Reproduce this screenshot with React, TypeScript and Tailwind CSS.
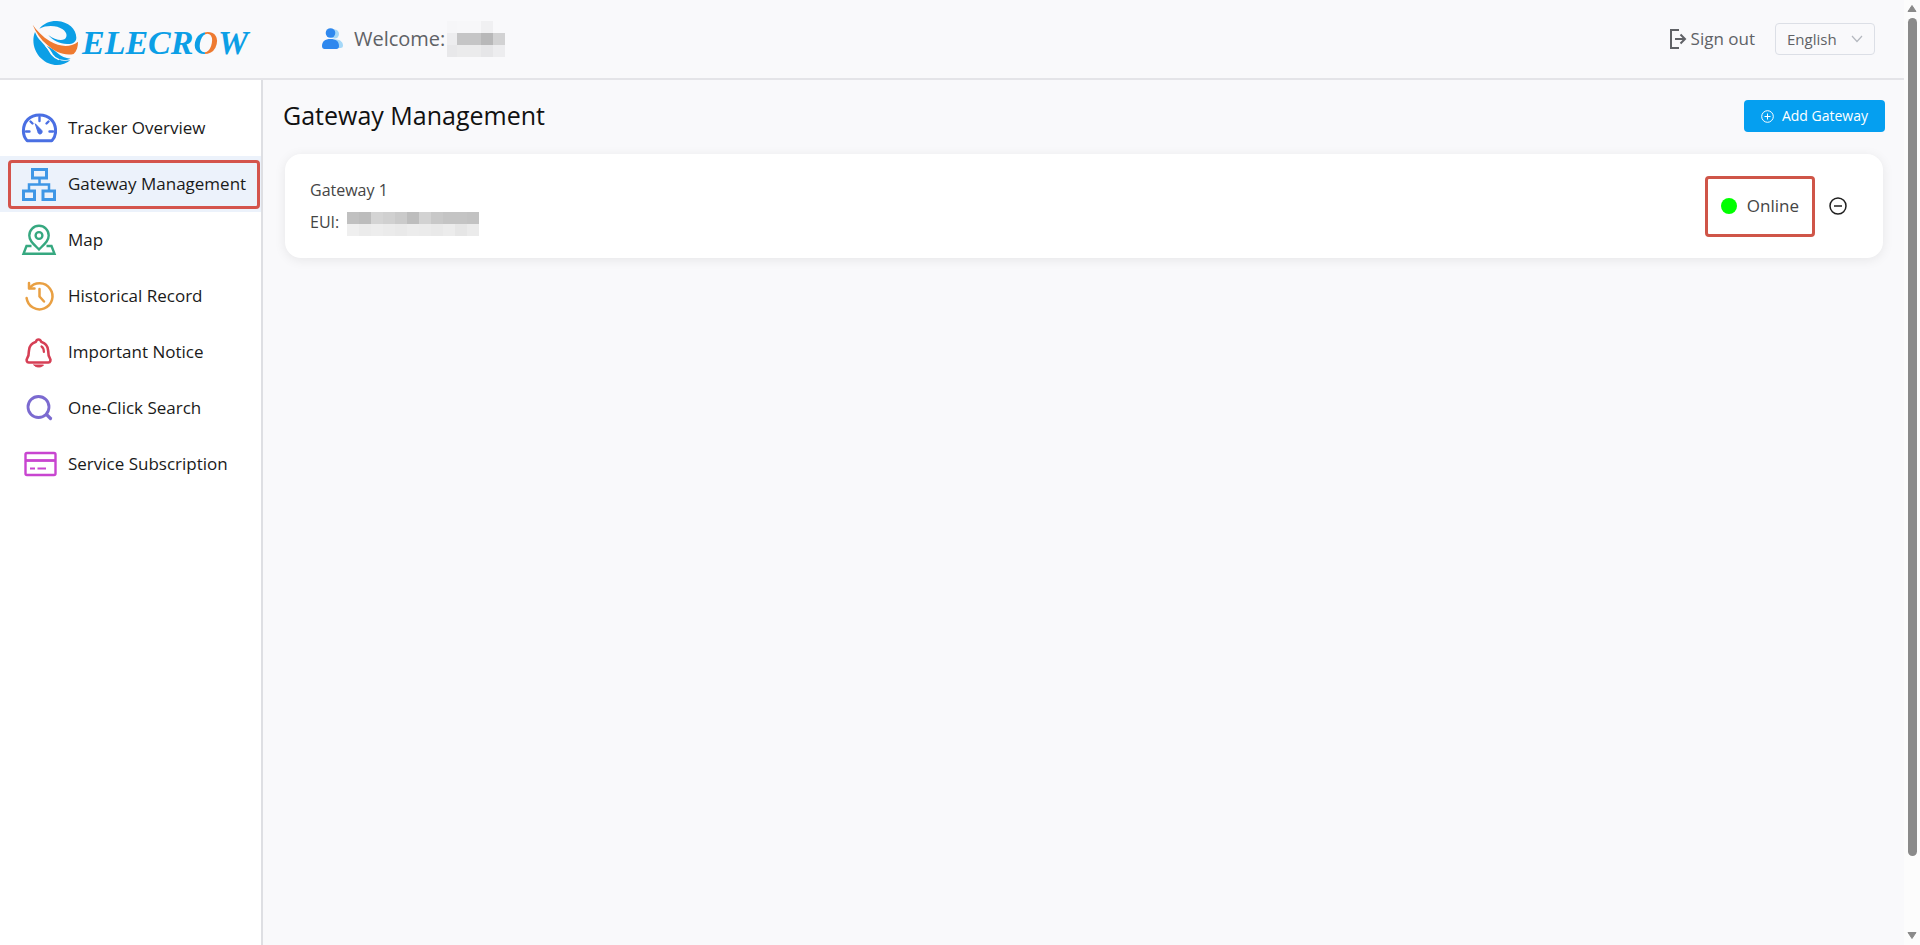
import type { ReactNode } from "react";

type NavItem = { label: string; icon: ReactNode; active?: boolean };

const GaugeIcon = () => (
  <svg width="36" height="36" viewBox="0 0 36 36" fill="none" stroke="#4a6fe3" strokeWidth="3" strokeLinecap="round" strokeLinejoin="round" aria-hidden="true">
    <path d="M6.200 30.800C3.600 28 2.400 24.500 2.400 21 2.400 11.500 9 5 18.500 5S34.600 11.500 34.600 21c0 3.500-1.200 7-3.800 9.800Z" />
    <path strokeWidth="2.400" d="M18.500 7v4M9.500 11.500l2 2M27.500 11.500l-2 2M5 21.500h3.500M32 21.500h-3.500" />
    <path fill="#4a6fe3" strokeWidth="1" d="M14.500 14l6.300 6.500c1 1.600-.2 3.700-2 3.500-1.200-.2-1.900-1.200-2-2.200Z" />
  </svg>
);

const NetworkIcon = () => (
  <svg width="36" height="36" viewBox="0 0 36 36" fill="none" stroke="#3f97e6" strokeWidth="3" aria-hidden="true">
    <path d="M11.500 3.500h14v8.500h-14zM2.500 25h11v8.500h-11zM22 25h11.500v8.500H22z" />
    <path strokeWidth="2.500" d="M18.500 12v6M8 25v-6.500h20V25" />
  </svg>
);

const MapIcon = () => (
  <svg width="36" height="36" viewBox="0 0 36 36" fill="none" stroke="#36a880" strokeWidth="2.400" strokeLinejoin="miter" aria-hidden="true">
    <path d="M18 27.500C12.500 22 8.300 18.800 8.300 13.500a9.700 9.700 0 0 1 19.400 0c0 5.300-4.200 8.500-9.700 14Z" />
    <circle cx="18" cy="13.500" r="3.400" />
    <path d="M10.500 24H5.500L2.500 31.800h31L30.500 24h-5" />
  </svg>
);

const HistoryIcon = () => (
  <svg width="36" height="36" viewBox="0 0 36 36" fill="none" stroke="#e9a043" strokeWidth="2.500" strokeLinecap="round" strokeLinejoin="round" aria-hidden="true">
    <path d="M5.600 20A13 13 0 1 0 8.500 10" />
    <path d="M8 5v5.500h5.500" />
    <path d="M18.500 11v7.500l4.500 5" />
  </svg>
);

const BellIcon = () => (
  <svg width="36" height="36" viewBox="0 0 36 36" fill="none" stroke="#d63f55" strokeWidth="2.600" strokeLinecap="round" strokeLinejoin="round" aria-hidden="true">
    <path d="M17.500 5.500c1.400 0 2.200 1 2.600 2.200 4.500 1.500 7.100 5 7.100 9.300 0 4.500.4 5.600 1.800 7.500 1 1.400.4 4-1.600 4H7.700c-2 0-2.600-2.600-1.600-4C7.500 22.600 7.900 21.500 7.900 17c0-4.300 2.600-7.800 7.100-9.300.3-1.200 1.100-2.200 2.500-2.200Z" />
    <path strokeWidth="2.200" d="M20.500 12.500c1.700 1 2.400 2.600 2.400 5.500" />
    <path fill="#d63f55" strokeWidth="1" d="M13 31h9.500c-1 1.400-2.600 2-4.700 2S14 32.400 13 31Z" />
  </svg>
);

const SearchIcon = () => (
  <svg width="36" height="36" viewBox="0 0 36 36" fill="none" stroke="#7b6ad0" strokeWidth="2.800" strokeLinecap="round" aria-hidden="true">
    <circle cx="17.500" cy="17" r="10.500" />
    <path strokeWidth="3.200" d="M25.500 24.500l4 4" />
  </svg>
);

const CardIcon = () => (
  <svg width="36" height="36" viewBox="0 0 36 36" fill="none" stroke="#c845d0" strokeWidth="2.400" strokeLinejoin="round" aria-hidden="true">
    <rect x="4.500" y="7" width="30" height="22" rx="1.500" />
    <path strokeWidth="2.800" d="M4.500 14.500h30" />
    <path strokeWidth="2.200" d="M9 22.500h5M16.500 22.500h8.500" />
  </svg>
);

const items: NavItem[] = [
  { label: "Tracker Overview", icon: <GaugeIcon /> },
  { label: "Gateway Management", icon: <NetworkIcon />, active: true },
  { label: "Map", icon: <MapIcon /> },
  { label: "Historical Record", icon: <HistoryIcon /> },
  { label: "Important Notice", icon: <BellIcon /> },
  { label: "One-Click Search", icon: <SearchIcon /> },
  { label: "Service Subscription", icon: <CardIcon /> },
];

function Logo() {
  return (
    <a href="#" aria-label="Elecrow" className="flex items-center gap-1 pt-1">
      <svg width="46" height="46" viewBox="18 24 138 138" aria-hidden="true">
        <g fill="#0c9fe6">
          <path d="M40 50C54 33 74 26 93 27c34 2 58 24 58 50 0 13-12 20-28 19-22-1-42-10-56-27 17 13 37 19 48 13 10-6 9-20-5-30C94 41 64 38 40 50Z" />
          <path d="M27 60C17 84 22 116 45 139c26 26 64 26 88 6-22 4-46-2-60-20C64 110 55 98 45 88 37 80 31 70 27 60Z" />
          <path d="M61 101c13 5 26 15 36 24 9 8 20 13 37 15-18 8-44 3-54-10-6-11-11-20-19-29Z" />
        </g>
        <path fill="none" stroke="#f9f9fb" strokeWidth="4" d="M59 101c10 8 15 18 20 27 4 6 10 12 20 15" />
        <path fill="#ee7a30" d="M20 38c12 18 30 36 52 50 30 17 60 20 84 1 0 14-3 27-13 37-28 6-56-6-79-27C44 82 30 62 20 38Z" />
      </svg>
      <span className="font-['Liberation_Serif',serif] text-[34px] leading-10 font-bold text-[#0c9fe6] italic">
        ELECR
        <span className="bg-linear-to-r from-[#0c9fe6] from-50% to-[#ee7a30] to-50% bg-clip-text text-transparent">O</span>
        W
      </span>
    </a>
  );
}

function Scrollbar() {
  return (
    <div aria-hidden="true" className="sticky top-0 flex h-screen w-4 shrink-0 flex-col items-center bg-[#fcfcfc] py-1">
      <svg width="10" height="10" viewBox="0 0 10 10" className="mb-1 shrink-0">
        <path d="M5 1.500L9 7.500H1Z" fill="#8a8a8a" stroke="#8a8a8a" strokeLinejoin="round" />
      </svg>
      <div className="w-[9px] flex-[45] rounded-full bg-[#8a8a8a]" />
      <div className="flex-[4]" />
      <svg width="10" height="10" viewBox="0 0 10 10" className="shrink-0">
        <path d="M5 7.500L1 1.500h8Z" fill="#8a8a8a" stroke="#8a8a8a" strokeLinejoin="round" />
      </svg>
    </div>
  );
}

function Header() {
  return (
    <header className="flex h-20 shrink-0 items-center border-b-2 border-[#e4e4e8] pr-[29px]">
      <div className="w-[263px] shrink-0 pt-1 pl-8">
        <Logo />
      </div>
      <div className="flex items-center pl-[57px] text-xl text-[#606266]">
        <svg width="24" height="24" viewBox="0 0 24 24" className="mr-2.5" aria-hidden="true">
          <circle cx="14.500" cy="7" r="4.500" fill="#a5d8f8" />
          <path d="M10 21c0-6 2-8.500 6-8.500 4.500 0 7 3 7 6 0 1.700-1 2.500-2.500 2.500Z" fill="#a5d8f8" />
          <circle cx="10.500" cy="6" r="4.800" fill="#2f88ee" />
          <path d="M2 19C2 14.500 5 12 10.500 12s8.500 2.500 8.500 7c0 2-1 3-2.500 3h-12C3 22 2 21 2 19Z" fill="#2f88ee" />
        </svg>
        <span>Welcome:</span>
        <span aria-hidden="true" className="ml-0.5 grid h-9 w-[58px] grid-cols-[10px_24px_12px_12px] grid-rows-[12px_12px_12px]">
          <i className="bg-[#f6f6f8]" /><i className="bg-[#f7f7f9]" /><i className="bg-[#f0f0f2]" /><i />
          <i className="bg-[#ededef]" /><i className="bg-[#c5c5c6]" /><i className="bg-[#b8b8b9]" /><i className="bg-[#d2d2d3]" />
          <i className="bg-[#e8e8ea]" /><i className="bg-[#ebebec]" /><i className="bg-[#e6e6e8]" /><i className="bg-[#ededef]" />
        </span>
      </div>
      <button type="button" className="ml-auto flex items-center gap-1 text-[17px] text-[#606266]">
        <svg width="18" height="22" viewBox="0 0 18 22" fill="none" stroke="#606266" strokeWidth="2" aria-hidden="true">
          <path d="M10 2H2v18h8" />
          <path d="M6 11h10M11.500 6.500L16 11l-4.500 4.500" />
        </svg>
        Sign out
      </button>
      <div className="relative ml-5">
        <select aria-label="Language" defaultValue="English" className="h-8 w-[100px] appearance-none rounded-sm border border-[#dcdfe6] bg-transparent pl-[11px] text-[15px] text-[#606266]">
          <option>English</option>
        </select>
        <svg width="12" height="8" viewBox="0 0 12 8" fill="none" stroke="#b4b8bf" strokeWidth="1.200" className="pointer-events-none absolute top-3 right-3" aria-hidden="true">
          <path d="M1 1l5 5.500L11 1" />
        </svg>
      </div>
    </header>
  );
}

function Sidebar() {
  return (
    <nav className="w-[263px] shrink-0 border-r-2 border-[#dedfe3] bg-white pt-5">
      <ul>
        {items.map((item) => (
          <li key={item.label} className={item.active ? "relative bg-[#ecf2fb]" : "relative"}>
            <a href="#" aria-current={item.active ? "page" : undefined} className="flex h-14 items-center gap-[11px] pl-[21px] text-[17px] whitespace-nowrap text-[#1a1a1a]">
              {item.icon}
              {item.label}
            </a>
            {item.active && (
              <span aria-hidden="true" className="pointer-events-none absolute inset-x-0 top-1 bottom-[3px] mr-px ml-2 rounded-sm border-3 border-[#d4544c]" />
            )}
          </li>
        ))}
      </ul>
    </nav>
  );
}

const maskTop = ["bg-[#c0c0c0]", "bg-[#bcbcbc]", "bg-[#d4d4d4]", "bg-[#d0d0d0]", "bg-[#cacaca]", "bg-[#bdbdbd]", "bg-[#d2d2d2]", "bg-[#c8c8c8]", "bg-[#c4c4c4]", "bg-[#c4c4c4]", "bg-[#c2c2c2]"];
const maskBottom = ["bg-[#efefef]", "bg-[#ebebeb]", "bg-[#ededed]", "bg-[#ebebeb]", "bg-[#e9e9e9]", "bg-[#ececec]", "bg-[#ebebeb]", "bg-[#e9e9e9]", "bg-[#ececec]", "bg-[#e6e6e6]", "bg-[#ebebeb]"];

function GatewayCard() {
  return (
    <section className="mx-0.5 flex items-center rounded-2xl bg-white py-5 pr-9 pl-[25px] text-[#454545] shadow-[0_2px_12px_rgba(0,0,0,0.08)]">
      <div className="text-base">
        <p className="leading-8">Gateway 1</p>
        <div className="flex items-end gap-2 leading-8">
          <span>EUI:</span>
          <span aria-hidden="true" className="mb-0.5 grid grid-cols-11">
            {[...maskTop, ...maskBottom].map((tone, i) => (
              <i key={i} className={`h-3 w-3 ${tone}`} />
            ))}
          </span>
        </div>
      </div>
      <div className="-my-1 ml-auto flex h-[61px] items-center gap-2.5 rounded-sm border-3 border-[#cf5548] px-[13px] text-[17px]">
        <span className="size-4 rounded-full bg-[#00ff00]" />
        Online
      </div>
      <button type="button" aria-label="Remove gateway" className="ml-3.5 text-[#1f1f1f]">
        <svg width="18" height="18" viewBox="0 0 18 18" fill="none" stroke="currentColor" strokeWidth="1.500" aria-hidden="true">
          <circle cx="9" cy="9" r="8" />
          <path d="M5 9h8" />
        </svg>
      </button>
    </section>
  );
}

export default function App() {
  return (
    <div className="flex min-h-screen bg-[#f9f9fb] font-['Open_Sans','Noto_Sans',sans-serif]">
      <div className="flex min-w-0 flex-1 flex-col">
        <Header />
        <div className="flex flex-1">
          <Sidebar />
          <main className="min-w-0 flex-1 pt-5 pr-[19px] pl-5">
            <div className="mb-[22px] flex h-8 items-center justify-between">
              <h1 className="text-[25px] text-[#111]">Gateway Management</h1>
              <button type="button" className="flex h-8 items-center gap-2 rounded-sm bg-[#059ff0] px-[17px] text-sm text-white">
                <svg width="13" height="13" viewBox="0 0 13 13" fill="none" stroke="currentColor" aria-hidden="true">
                  <circle cx="6.500" cy="6.500" r="5.800" />
                  <path d="M6.500 3.500v6M3.500 6.500h6" />
                </svg>
                Add Gateway
              </button>
            </div>
            <GatewayCard />
          </main>
        </div>
      </div>
      <Scrollbar />
    </div>
  );
}
